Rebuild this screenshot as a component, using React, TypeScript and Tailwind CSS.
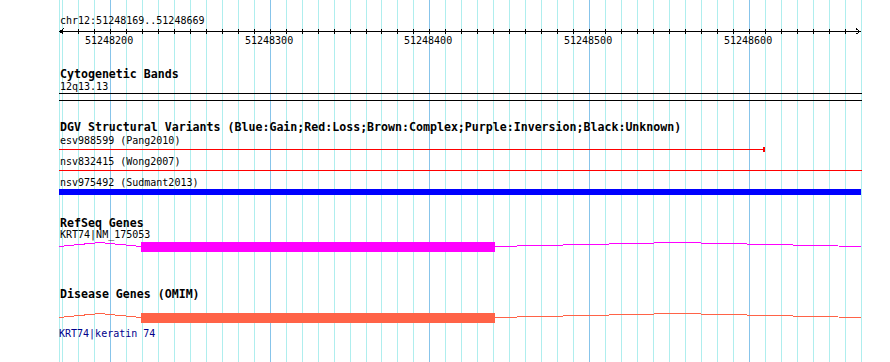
import React from 'react';

const START = 51248169;
const gx = (bp: number) => Math.round(60.5 + (bp - START) * 1.597);

const minorTicks = Array.from({ length: 51 }, (_, i) => 51248170 + i * 10);
const majors = [51248200, 51248300, 51248400, 51248500, 51248600];

function GridLines() {
  return (
    <svg className="absolute left-0 top-0" width={890} height={362} shapeRendering="crispEdges">
      <line x1={59.5} y1={0} x2={59.5} y2={362} stroke="#afeeee" />
      {minorTicks.map((bp) => {
        const x = gx(bp) + 0.5;
        const major = bp % 100 === 0;
        return <line key={bp} x1={x} y1={0} x2={x} y2={362} stroke={major ? '#87c4ea' : '#afeeee'} />;
      })}
    </svg>
  );
}

function Axis() {
  return (
    <svg width={890} height={7} shapeRendering="crispEdges" className="block">
      <line x1={60} y1={4.5} x2={860} y2={4.5} stroke="#000" />
      {minorTicks.slice(0, 50).map((bp) => (
        <line key={bp} x1={gx(bp) + 0.5} y1={2} x2={gx(bp) + 0.5} y2={7} stroke="#000" />
      ))}
      <polyline points="64,1.5 60,4.5 64,7.5" fill="none" stroke="#000" />
      <polyline points="856,1.5 860,4.5 856,7.5" fill="none" stroke="#000" />
    </svg>
  );
}

function GeneGlyph({ color }: { color: string }) {
  return (
    <svg width={890} height={12} shapeRendering="crispEdges" className="block">
      <polyline points="59,5.5 100,1.5 141,5.5" fill="none" stroke={color} />
      <rect x={141} y={1} width={354} height={10} fill={color} />
      <polyline points="495,5.5 678,1.5 861,5.5" fill="none" stroke={color} />
    </svg>
  );
}

const title = 'pl-[60px] text-[11.6px] font-bold leading-[13px] whitespace-nowrap';
const label = 'pl-[60px] h-[13px] text-[10px] leading-[13px] whitespace-nowrap';

export default function App() {
  return (
    <div className="relative w-[890px] h-[362px] overflow-hidden bg-white text-black font-['DejaVu_Sans_Mono',monospace]">
      <GridLines />
      <div className="relative flex flex-col">
        {/* ruler */}
        <div className="h-[14px]" />
        <div className={label}>chr12:51248169..51248669</div>
        <Axis />
        <div className="relative h-[13px] text-[10px] leading-[13px]">
          {majors.map((bp) => (
            <span key={bp} className="absolute top-0" style={{ left: gx(bp) - 25 }}>
              {bp}
            </span>
          ))}
        </div>

        {/* cytogenetic bands */}
        <div className="h-[21px]" />
        <div className={`${title} h-[12px]`}>Cytogenetic Bands</div>
        <div className={label}>12q13.13</div>
        <svg width={890} height={8} shapeRendering="crispEdges" className="block">
          <line x1={59} y1={0.5} x2={862} y2={0.5} stroke="#000" />
          <line x1={59} y1={7.5} x2={862} y2={7.5} stroke="#000" />
        </svg>

        {/* DGV */}
        <div className="h-[20px]" />
        <div className={`${title} h-[13px]`}>
          DGV Structural Variants (Blue:Gain;Red:Loss;Brown:Complex;Purple:Inversion;Black:Unknown)
        </div>
        <div className={label}>esv988599 (Pang2010)</div>
        <svg width={890} height={8} shapeRendering="crispEdges" className="block">
          <line x1={59} y1={2.5} x2={764} y2={2.5} stroke="#ff0000" />
          <rect x={763} y={0} width={2} height={5} fill="#ff0000" />
        </svg>
        <div className={label}>nsv832415 (Wong2007)</div>
        <svg width={890} height={8} shapeRendering="crispEdges" className="block">
          <line x1={59} y1={2.5} x2={862} y2={2.5} stroke="#ff0000" />
        </svg>
        <div className={label}>nsv975492 (Sudmant2013)</div>
        <div className="ml-[59px] w-[802px] h-[6px] bg-[#0000ff]" />

        {/* RefSeq */}
        <div className="h-[22px]" />
        <div className={`${title} h-[11px]`}>RefSeq Genes</div>
        <div className={label}>KRT74|NM_175053</div>
        <GeneGlyph color="#ff00ff" />

        {/* OMIM */}
        <div className="h-[35px]" />
        <div className={`${title} h-[24px]`}>Disease Genes (OMIM)</div>
        <GeneGlyph color="#ff6347" />
        <div className="h-[3px]" />
        <div className={`${label} !pl-[59px] text-[#00008b]`}>KRT74|keratin 74</div>
      </div>
    </div>
  );
}
